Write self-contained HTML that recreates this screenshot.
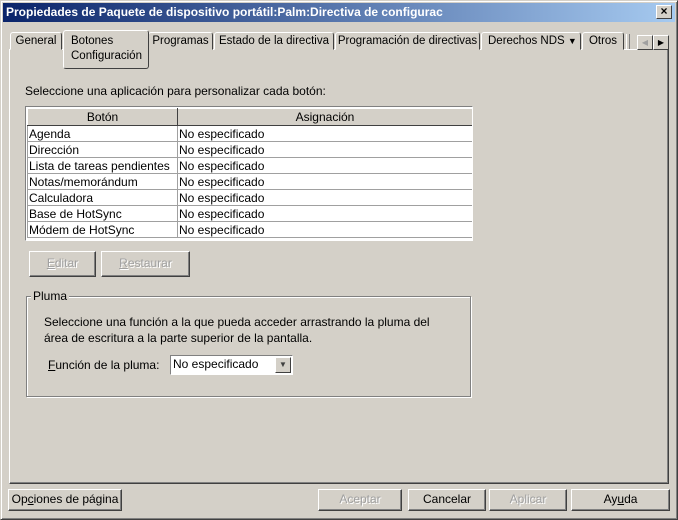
<!DOCTYPE html>
<html><head><meta charset="utf-8"><style>
*{margin:0;padding:0;box-sizing:border-box;white-space:nowrap}
body{width:678px;height:520px;background:#d4d0c8;font-family:"Liberation Sans",Arial,sans-serif;font-size:12px;color:#000;position:relative;overflow:hidden}
.a{position:absolute;white-space:nowrap}
.win{position:absolute;left:0;top:0;width:678px;height:520px;border:1px solid;border-color:#d4d0c8 #404040 #404040 #d4d0c8;box-shadow:inset 1px 1px 0 #fff,inset -1px -1px 0 #808080}
.title{position:absolute;left:3px;top:3px;width:672px;height:19px;background:linear-gradient(90deg,#0a246a,#a6caf0);color:#fff;font-weight:bold;font-size:12px;line-height:18px;padding-left:3px}
.xb{position:absolute;left:656px;top:5px;width:16px;height:14px;background:#d4d0c8;border:1px solid;border-color:#fff #404040 #404040 #fff;color:#000;font-size:12px;line-height:11px;text-align:center;font-weight:bold}
.tab{position:absolute;top:32px;height:18px;border:1px solid;border-color:#fff #404040 transparent #fff;border-radius:3px 3px 0 0;line-height:16px;text-align:center;background:#d4d0c8;font-size:11.5px;overflow:hidden}
.panel{position:absolute;left:9px;top:49px;width:660px;height:435px;border:1px solid;border-color:#fff #404040 #404040 #fff;box-shadow:inset -1px -1px 0 #808080}
.btn{position:absolute;height:22px;border:1px solid;border-color:#fff #404040 #404040 #fff;box-shadow:inset -1px -1px 0 #808080;text-align:center;line-height:19px;background:#d4d0c8}
.dis{color:#a0a0a0;text-shadow:1px 1px 0 #fff}
table{border-collapse:collapse;background:#fff}
td{border:1px solid #a0a0a0;height:16px;padding:0 1px;line-height:14px}
th{font-weight:normal;background:#d4d0c8;height:17px;border:1px solid;border-color:#fff #404040 #404040 #fff}
</style></head><body>
<div class="win"></div>
<div class="title">Propiedades de Paquete de dispositivo portátil:Palm:Directiva de configurac</div>
<div class="xb">×</div>
<div class="panel"></div>
<div class="tab" style="left:10px;width:52px">General</div>
<div class="tab" style="left:148px;width:65px">Programas</div>
<div class="tab" style="left:214px;width:120px">Estado de la directiva</div>
<div class="tab" style="left:335px;width:145px">Programación de directivas</div>
<div class="tab" style="left:481px;width:100px;text-align:left;padding-left:6px">Derechos NDS <span style="font-size:9px">▼</span></div>
<div class="tab" style="left:582px;width:42px">Otros</div>
<div class="a" style="left:626px;top:34px;width:4px;height:15px;border-left:1px solid #fff;border-right:1px solid #808080"></div>
<div class="a" style="left:637px;top:35px;width:16px;height:15px;border:1px solid;border-color:#fff #404040 #404040 #fff;font-size:8px;text-align:center;line-height:13px;color:#a0a0a0">◀</div>
<div class="a" style="left:653px;top:35px;width:16px;height:15px;border:1px solid;border-color:#fff #404040 #404040 #fff;font-size:8px;text-align:center;line-height:13px">▶</div>
<div class="a" style="left:63px;top:30px;width:86px;height:39px;border:1px solid;border-color:#fff #404040 #404040 #fff;border-radius:3px;background:#d4d0c8;padding:3px 0 0 7px;line-height:15px;font-size:11.5px">Botones<br>Configuración</div>
<div class="a" style="left:25px;top:84px">Seleccione una aplicación para personalizar cada botón:</div>
<div class="a" style="left:25px;top:106px;width:448px;height:135px;border:1px solid;border-color:#808080 #fff #fff #808080;background:#fff;overflow:hidden">
<table style="width:446px;margin:1px 0 0 1px">
<tr><th style="width:150px">Botón</th><th>Asignación</th></tr>
<tr><td>Agenda</td><td>No especificado</td></tr>
<tr><td>Dirección</td><td>No especificado</td></tr>
<tr><td>Lista de tareas pendientes</td><td>No especificado</td></tr>
<tr><td>Notas/memorándum</td><td>No especificado</td></tr>
<tr><td>Calculadora</td><td>No especificado</td></tr>
<tr><td>Base de HotSync</td><td>No especificado</td></tr>
<tr><td>Módem de HotSync</td><td>No especificado</td></tr>
</table></div>
<div class="btn dis" style="left:29px;top:251px;width:67px;height:26px;line-height:23px"><u>E</u>ditar</div>
<div class="btn dis" style="left:101px;top:251px;width:89px;height:26px;line-height:23px"><u>R</u>estaurar</div>
<div class="a" style="left:26px;top:296px;width:445px;height:101px;border:1px solid #808080;box-shadow:1px 1px 0 #fff,inset 1px 1px 0 #fff"></div>
<div class="a" style="left:31px;top:289px;background:#d4d0c8;padding:0 2px">Pluma</div>
<div class="a" style="left:44px;top:314px;line-height:16px">Seleccione una función a la que pueda acceder arrastrando la pluma del<br>área de escritura a la parte superior de la pantalla.</div>
<div class="a" style="left:48px;top:358px"><u>F</u>unción de la pluma:</div>
<div class="a" style="left:170px;top:355px;width:123px;height:20px;border:1px solid;border-color:#808080 #fff #fff #808080;background:#fff;padding-left:2px;line-height:17px">No especificado</div>
<div class="a" style="left:275px;top:357px;width:16px;height:16px;border:1px solid;border-color:#fff #404040 #404040 #fff;background:#d4d0c8;font-size:8px;text-align:center;line-height:14px;color:#404040">▼</div>
<div class="btn" style="left:8px;top:489px;width:114px">Op<u>c</u>iones de página</div>
<div class="btn dis" style="left:318px;top:489px;width:84px">Aceptar</div>
<div class="btn" style="left:408px;top:489px;width:78px">Cancelar</div>
<div class="btn dis" style="left:489px;top:489px;width:78px">Aplicar</div>
<div class="btn" style="left:571px;top:489px;width:99px">Ay<u>u</u>da</div>
</body></html>
